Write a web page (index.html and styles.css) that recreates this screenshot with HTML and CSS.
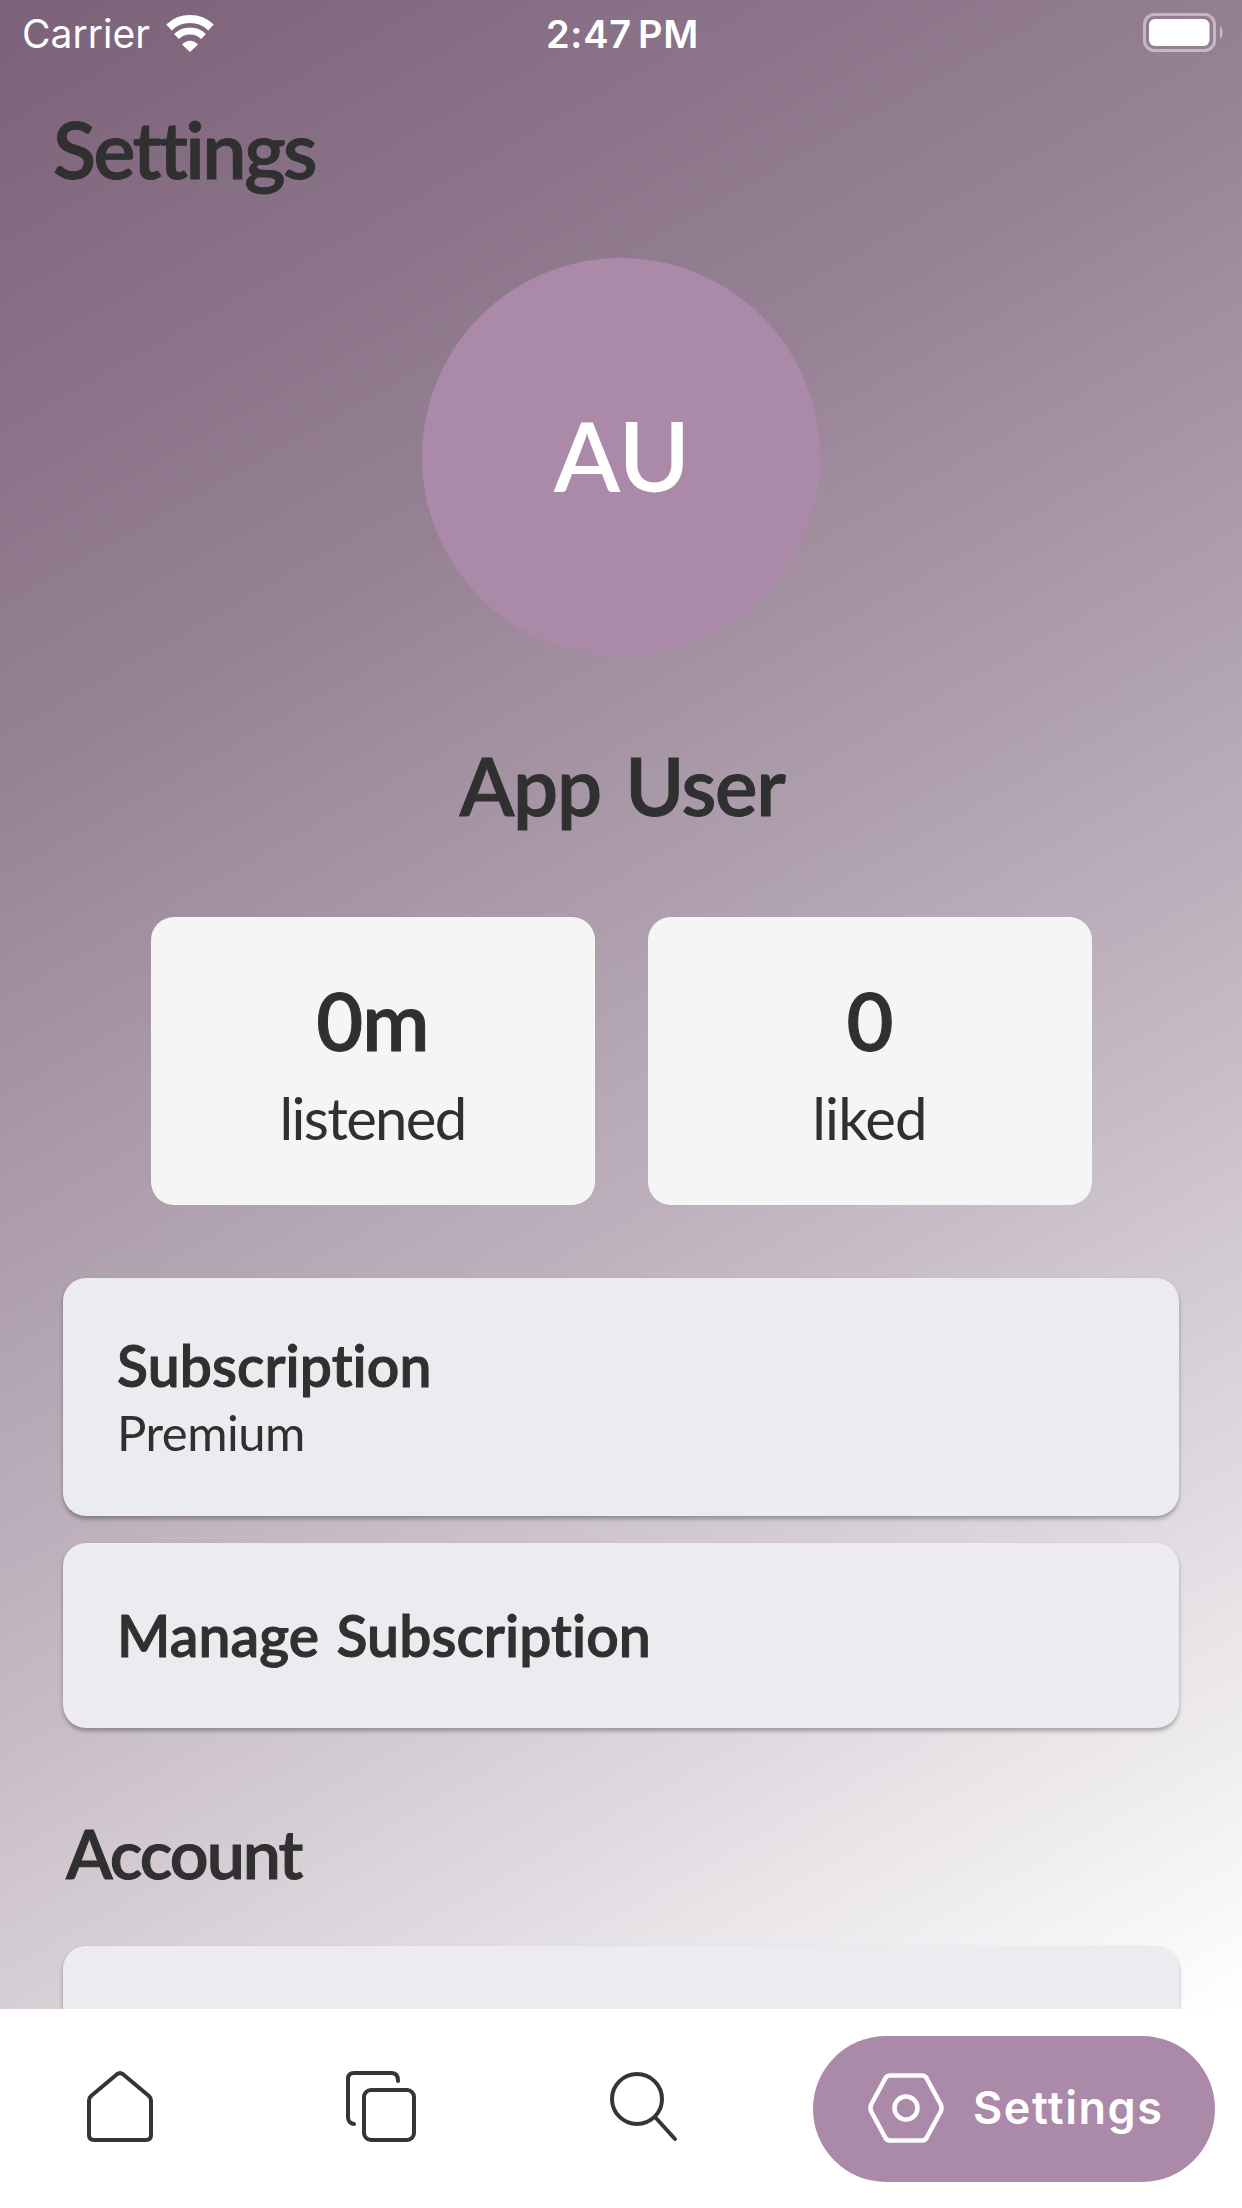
FILE: index.html
```
<!DOCTYPE html>
<html lang="en">
  <head>
    <meta charset="utf-8">
    <title>Settings</title>
    <link rel="stylesheet" href="styles.css">
  </head>
  <body>
    <main class="screen">
        <div class="status">
            <div class="carrier">
                <span>Carrier</span>
                <svg class="wifi" width="50" height="37" viewBox="0 0 50 37">
                    <path d="M4 12.500A30.500 30.500 0 0 1 46 12.500" stroke-width="8"/>
                    <path d="M11.500 21.500A19.500 19.500 0 0 1 38.500 21.500" stroke-width="7"/>
                    <path class="dot" d="M17 29.500Q25 22 33 29.500L25 37Z"/>
                </svg>
            </div>
            <div class="time">2:47 PM</div>
            <div class="battery">
                <svg width="80" height="40" viewBox="0 0 80 40">
                    <rect class="shell" x="1.500" y="1.500" width="70" height="36" rx="10"/>
                    <rect x="6" y="6" width="60.500" height="27" rx="6"/>
                    <path class="nub" d="M77 13Q79.500 15 79.500 19.500T77 26Z"/>
                </svg>
            </div>
        </div>
        <h1 class="title">Settings</h1>
        <div class="avatar">AU</div>
        <h2 class="name">App User</h2>
        <div class="stats">
            <div class="stat">
                <div class="value">0m</div>
                <div class="label listened">listened</div>
            </div>
            <div class="stat">
                <div class="value">0</div>
                <div class="label">liked</div>
            </div>
        </div>
        <div class="card plan">
            <h3>Subscription</h3>
            <p>Premium</p>
        </div>
        <div class="card manage">
            <h3>Manage Subscription</h3>
        </div>
        <h2 class="section">Account</h2>
        <div class="card"></div>
    </main>
    <nav>
        <a class="tab">
            <svg width="66" height="72" viewBox="0 0 66 72">
                <path d="M2 29.500Q2 27 4 25L30 3.200Q33 1 36 3.200L62 25Q64 27 64 29.500V64Q64 69 59 69H7Q2 69 2 64Z"/>
            </svg>
        </a>
        <a class="tab tab-copy">
            <svg width="70" height="72" viewBox="0 0 70 72">
                <path d="M8 53Q2 52 2 46V8Q2 2 8 2H46Q52 2 52 10"/>
                <rect x="18" y="19" width="50" height="50" rx="7"/>
            </svg>
        </a>
        <a class="tab tab-search">
            <svg width="68" height="72" viewBox="0 0 68 72">
                <circle cx="27" cy="28" r="25"/>
                <path d="M45 46L65 68"/>
            </svg>
        </a>
        <a class="tab-active">
            <svg width="76" height="70" viewBox="0 0 76 70">
                <path d="M22 2.500H54Q57 2.500 58.500 5L72.500 31Q74.500 35 72.500 39L58.500 65Q57 67.500 54 67.500H22Q19 67.500 17.500 65L3.500 39Q1.500 35 3.500 31L17.500 5Q19 2.500 22 2.500Z"/>
                <circle cx="38" cy="35" r="11.500"/>
            </svg>
            <span>Settings</span>
        </a>
    </nav>
  </body>
</html>
```
FILE: styles.css
```
*{
    box-sizing: border-box;
}
body{
    margin:0;
    width:1242px;
    height:2208px;
    display:flex;
    flex-direction: column;
    overflow:hidden;
    background:linear-gradient(150.64deg, #7b6179, #978295 27%, #bdb0bc 54%, #fdfdfd 92%, #fff);
    font-family: Lato, "Open Sans", sans-serif;
    color:#303030;
}
h1, h2, h3, p{
    margin:0;
}
svg{
    display:block;
    fill:none;
}

.screen{
    height:2009px;
    overflow:hidden;
}

/* status bar */
.status{
    display:flex;
    height:68px;
    padding:0 20px 0 22px;
    line-height:68px;
    font-family: Inter, sans-serif;
    font-size:39px;
    color:#fff;
}
.carrier, .battery{
    flex:1;
    display:flex;
}
.wifi{
    margin:15px 0 0 15px;
    stroke:#fff;
}
.wifi .dot{
    fill:#fff;
    stroke:none;
}
.time{
    font-weight:600;
    font-size:38px;
    letter-spacing:0.7px;
    word-spacing:-4px;
}
.battery{
    justify-content: flex-end;
    padding-top:13px;
    margin-right:-1px;
}
.battery rect, .battery .nub{
    fill:#fff;
}
.battery .shell{
    fill:none;
    stroke:#fff;
    stroke-width:3;
    opacity:0.45;
}
.battery .nub{
    opacity:0.5;
}

/* headings are a bit heavier than semibold */
.title, .name, .value, .section, .card h3{
    font-weight:600;
    -webkit-text-stroke:1px #303030;
}
.title{
    margin:33px 0 0 53px;
    font-size:79px;
    line-height:96px;
    letter-spacing:-2.5px;
}
.avatar{
    width:398px;
    height:398px;
    margin:61px auto 0;
    padding:0 0 6px 2px;
    display:flex;
    align-items: center;
    justify-content: center;
    border-radius:50%;
    background:#aa89a9;
    color:#fff;
    font-size:97px;
    font-weight:600;
}
.name{
    margin-top:81px;
    padding-left:2px;
    text-align:center;
    font-size:80px;
    line-height:96px;
    word-spacing:6px;
    letter-spacing:-1.3px;
}

.stats{
    display:flex;
    justify-content: center;
    gap:53px;
    margin:84px 0 73px;
}
.stat{
    width:444px;
    height:288px;
    padding-top:55px;
    border-radius:23px;
    background:#f5f5f5;
    text-align:center;
}
.value{
    font-size:81px;
    line-height:96px;
    letter-spacing:-1px;
}
.label{
    margin-top:15px;
    font-size:58px;
    line-height:70px;
    letter-spacing:-0.8px;
}
.listened{
    letter-spacing:-1.7px;
}

.card{
    width:1116px;
    height:185px;
    margin-left:63px;
    padding:58px 54px 0;
    border-radius:23px;
    background:#ecebf0;
    box-shadow:0 3px 4px rgba(0,0,0,0.3);
}
.card h3{
    font-size:57px;
    line-height:68px;
    word-spacing:3px;
    letter-spacing:0.1px;
}
.card p{
    margin-top:3px;
    font-size:49px;
    line-height:60px;
    letter-spacing:-0.5px;
}
.plan{
    height:238px;
    margin-bottom:27px;
    padding-top:53px;
}
.section{
    margin:84px 0 52px 66px;
    font-size:68px;
    line-height:82px;
    letter-spacing:-2px;
}

/* bottom navigation */
nav{
    height:199px;
    padding:27px 27px 0 87px;
    display:flex;
    background:#fff;
}
.tab{
    padding-top:35px;
}
.tab-copy{
    margin:0 194px 0 193px;
}
.tab svg{
    stroke:#353535;
    stroke-width:4;
    stroke-linecap: round;
    stroke-linejoin: round;
}
.tab-active{
    width:402px;
    height:146px;
    margin-left:auto;
    padding:0 0 3px 55px;
    display:flex;
    align-items: center;
    border-radius:73px;
    background:#aa89a9;
    color:#fff;
    font-family: Inter, sans-serif;
    font-size:45px;
    font-weight:600;
    letter-spacing:1.5px;
}
.tab-active svg{
    margin-right:29px;
    stroke:#fff;
    stroke-width:4.5;
}
```
